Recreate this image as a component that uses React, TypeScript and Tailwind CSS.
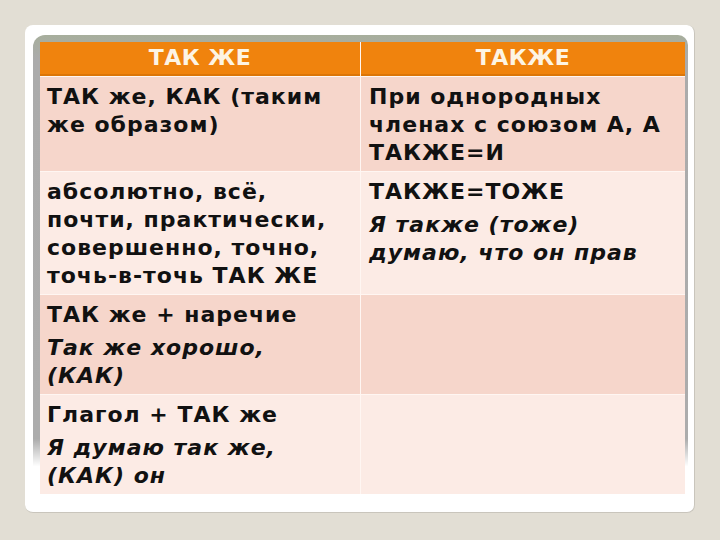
import React from "react";

// Table rows: left and right cells, each a list of paragraphs
type Para = { lines: string[]; italic?: boolean };
type Row = { left: Para[]; right: Para[]; bg: string };

const rows: Row[] = [
    {
        bg: "bg-[#f6d6cb]",
        left: [{ lines: ["ТАК же, КАК (таким", "же образом)"] }],
        right: [{ lines: ["При однородных", "членах с союзом А, А", "ТАКЖЕ=И"] }],
    },
    {
        bg: "bg-[#fcebe5]",
        left: [{ lines: ["абсолютно, всё,", "почти, практически,", "совершенно, точно,", "точь-в-точь ТАК ЖЕ"] }],
        right: [
            { lines: ["ТАКЖЕ=ТОЖЕ"] },
            { lines: ["Я также (тоже)", "думаю, что он прав"], italic: true },
        ],
    },
    {
        bg: "bg-[#f6d6cb]",
        left: [
            { lines: ["ТАК же + наречие"] },
            { lines: ["Так же хорошо,", "(КАК)"], italic: true },
        ],
        right: [],
    },
    {
        bg: "bg-[#fcebe5]",
        left: [
            { lines: ["Глагол + ТАК же"] },
            { lines: ["Я думаю так же,", "(КАК) он"], italic: true },
        ],
        right: [],
    },
];

function Cell({ paras, bg, wide }: { paras: Para[]; bg: string; wide?: boolean }) {
    return (
        <div className={`${bg} pt-[6px] pb-[4px] ${wide ? "pl-[8px]" : "pl-[7px]"} flex flex-col gap-[5px] whitespace-nowrap`}>
            {paras.map((p, i) => (
                <div key={i} className={p.italic ? "italic" : ""}>
                    {p.lines.map((l, j) => (
                        <div key={j}>{l}</div>
                    ))}
                </div>
            ))}
        </div>
    );
}

export default function App() {
    return (
        <div className="w-[720px] h-[540px] bg-[#e2ded4] pt-[25px] pl-[25px] overflow-hidden">
            {/* White slide card */}
            <div className="w-[670px] h-[488px] bg-white rounded-[8px] border-r border-b border-[#c9c5bc] pt-[10px] pl-[8px]">
                {/* Grey frame behind the table */}
                <div className="w-[655px] rounded-tl-[12px] rounded-tr-[10px] pl-[7px] pt-[7px] pr-[3px] bg-[linear-gradient(to_bottom,#a7ae9c_0px,#ababab_24px,#acacac_88%,transparent_94%)]">
                    <div className="w-[645px] font-['DejaVu_Sans',Verdana,sans-serif] font-bold text-[22px] tracking-[1px] leading-[28px] text-[#111] bg-[#fff6f2] grid grid-cols-[320px_1fr] gap-x-[1px] gap-y-[1px]">
                        {/* Header */}
                        <div className="h-[34px] bg-[#f0830d] border-b-[2px] border-[#dc7608] flex items-center justify-center text-[#fdf4e4] text-[22px] tracking-[0.5px]">
                            ТАК ЖЕ
                        </div>
                        <div className="h-[34px] bg-[#f0830d] border-b-[2px] border-[#dc7608] flex items-center justify-center text-[#fdf4e4] text-[22px] tracking-[0.5px]">
                            ТАКЖЕ
                        </div>

                        {rows.map((r, i) => (
                            <React.Fragment key={i}>
                                <Cell paras={r.left} bg={r.bg} />
                                <Cell paras={r.right} bg={r.bg} wide />
                            </React.Fragment>
                        ))}
                    </div>
                </div>
            </div>
        </div>
    );
}
